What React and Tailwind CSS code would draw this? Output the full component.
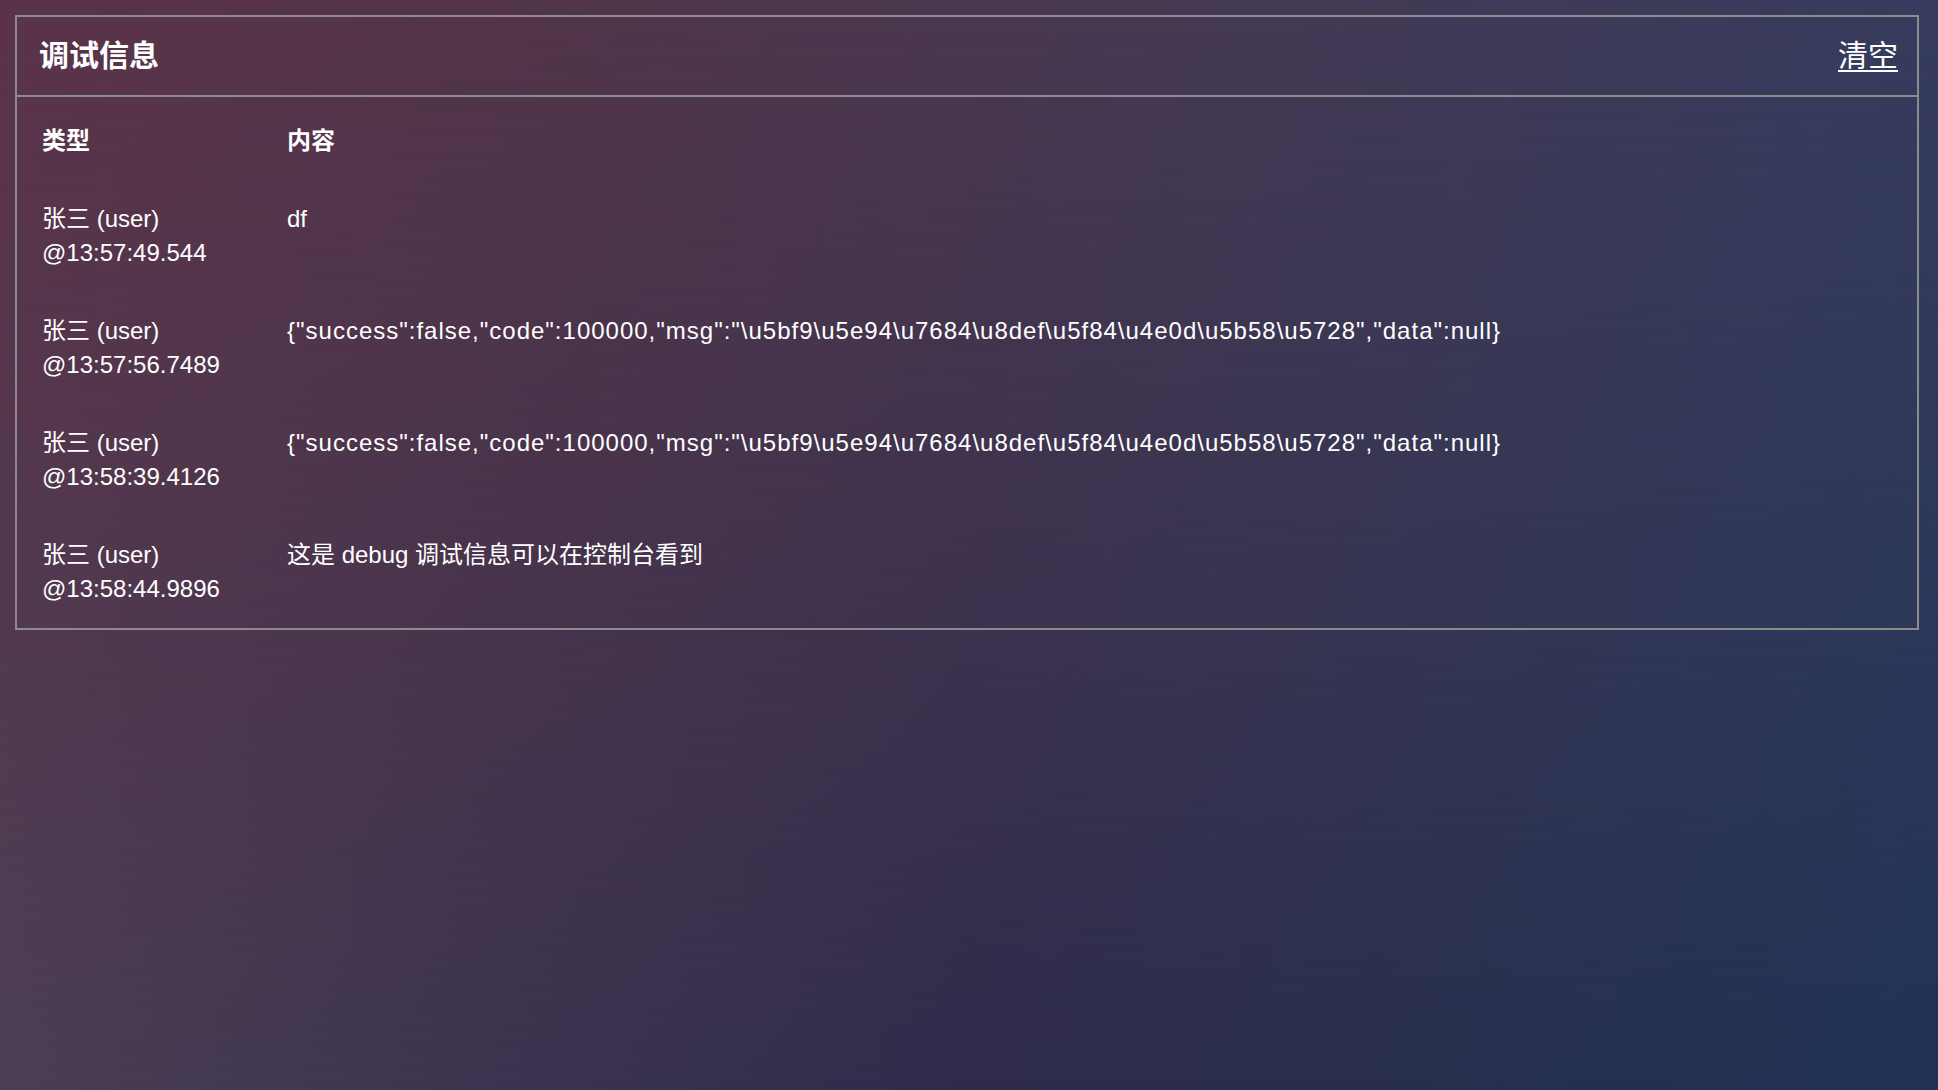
import React from "react";

const rows = [
  { who: "张三 (user)", at: "@13:57:49.544", content: "df" },
  {
    who: "张三 (user)",
    at: "@13:57:56.7489",
    content:
      '{"success":false,"code":100000,"msg":"\\u5bf9\\u5e94\\u7684\\u8def\\u5f84\\u4e0d\\u5b58\\u5728","data":null}',
    wide: true,
  },
  {
    who: "张三 (user)",
    at: "@13:58:39.4126",
    content:
      '{"success":false,"code":100000,"msg":"\\u5bf9\\u5e94\\u7684\\u8def\\u5f84\\u4e0d\\u5b58\\u5728","data":null}',
    wide: true,
  },
  { who: "张三 (user)", at: "@13:58:44.9896", content: "这是 debug 调试信息可以在控制台看到" },
];

export default function App() {
  return (
    <div className="relative min-h-[1090px] w-full overflow-hidden bg-[linear-gradient(to_right,#4b3f55_0%,#3c3450_25%,#302c4c_50%,#28304f_75%,#213356_100%)] font-['Liberation_Sans','Noto_Sans_CJK_SC',sans-serif] text-white">
      <div className="pointer-events-none absolute inset-0 bg-[linear-gradient(to_right,#5b3349_0%,#523549_30%,#463953_60%,#373c5e_100%)] [mask-image:linear-gradient(to_bottom,black_0%,rgba(0,0,0,0.6)_45%,transparent_100%)]" />
      <div className="relative pt-[15px] pl-[15px] pr-[19px]">
        <div className="border-2 border-[#8b8b8b]">
          <div className="flex h-[80px] items-center justify-between border-b-2 border-[#8b8b8b] pl-[22px] pr-[19px]">
            <div className="text-[30px] font-semibold leading-none">调试信息</div>
            <button className="text-[30px] leading-none underline underline-offset-[4px] decoration-2">清空</button>
          </div>
          <div className="pt-[5px]">
            <div className="grid grid-cols-[270px_1fr] text-[24px] leading-[34px]">
              <div className="py-[22px] pl-[25px] font-bold">类型</div>
              <div className="py-[22px] font-bold">内容</div>
              {rows.map((r, i) => (
                <React.Fragment key={i}>
                  <div className="py-[22px] pl-[25px]">
                    <div>{r.who}</div>
                    <div>{r.at}</div>
                  </div>
                  <div className={r.wide ? "py-[22px] pr-[20px] tracking-[1px]" : "py-[22px] pr-[20px]"}>
                    {r.content}
                  </div>
                </React.Fragment>
              ))}
            </div>
          </div>
        </div>
      </div>
    </div>
  );
}
